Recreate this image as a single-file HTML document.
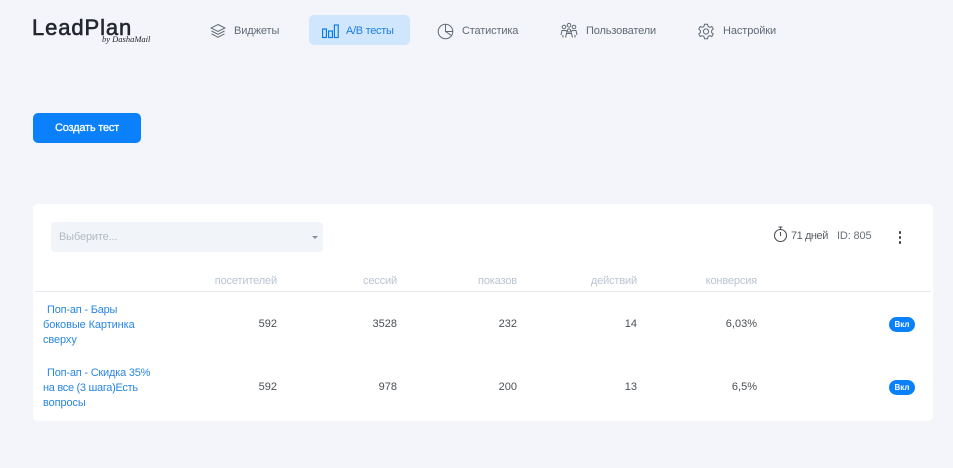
<!DOCTYPE html>
<html lang="ru"><head><meta charset="utf-8"><title>LeadPlan</title>
<style>
*{margin:0;padding:0;box-sizing:border-box}
html,body{width:953px;height:468px;overflow:hidden;background:#f3f5fa;font-family:"Liberation Sans",sans-serif}
.t{position:absolute;white-space:nowrap;line-height:14px}
.nav{font-size:11px;color:#5f6a75;top:24px;letter-spacing:-.1px}
.h{font-size:11px;color:#b9c4d2;top:274px;letter-spacing:-.15px;text-align:right;width:90px}
.n{font-size:11px;color:#4a4f55;text-align:right;width:70px}
.l{font-size:11px;color:#2a86e0;left:43px;line-height:15px;letter-spacing:-.1px}
.l span{margin-left:4px;letter-spacing:-.2px}
.b{position:absolute;left:889px;width:26px;height:15px;border-radius:8px;background:#0a80fa;color:#fff;font-size:8px;font-weight:bold;text-align:center;line-height:15px}
svg{position:absolute;fill:none;stroke:#5f6a75;stroke-width:1}
</style></head><body>
<div class="t" style="left:32px;top:14px;font-size:22px;line-height:27px;color:#25272f;letter-spacing:.9px;-webkit-text-stroke:.6px #25272f">LeadPlan</div>
<div class="t" style="left:102px;top:34px;font-size:8.5px;line-height:10px;color:#25272f;font-family:'Liberation Serif',serif;font-style:italic">by DashaMail</div>

<svg style="left:210px;top:23px" width="16" height="16" viewBox="0 0 16 16"><path d="M8 1.5 15 5 8 8.5 1 5Z"/><path d="M1.5 8 8 11.3 14.5 8"/><path d="M1.5 10.8 8 14.3 14.5 10.8"/></svg>
<div class="t nav" style="left:234px">Виджеты</div>

<div style="position:absolute;left:309px;top:15px;width:101px;height:30px;border-radius:5px;background:#cfe6fd"></div>
<svg style="left:322px;top:24px;stroke:#0a7de8;stroke-width:1.2" width="17" height="15" viewBox="0 0 17 15"><rect x=".6" y="5" width="3.8" height="8.5"/><rect x="6.6" y="7" width="3.8" height="6.5"/><rect x="12.4" y="1" width="3.8" height="12.5"/></svg>
<div class="t nav" style="left:346px;color:#1a7fe0;letter-spacing:-.3px">A/B тесты</div>

<svg style="left:437px;top:23px" width="17" height="17" viewBox="0 0 17 17"><circle cx="8.5" cy="8.5" r="7.3"/><path d="M8.5 1.2V8.5L14.5 12.5"/><path d="M8.5 8.5H15.8"/></svg>
<div class="t nav" style="left:462px;letter-spacing:-.15px">Статистика</div>

<svg style="left:560px;top:22px;stroke-width:1" width="18" height="17" viewBox="0 0 18 17"><circle cx="4" cy="5" r="1.8"/><circle cx="9" cy="3.2" r="1.8"/><circle cx="14" cy="5" r="1.8"/><circle cx="9" cy="8.5" r="1.6"/><path d="M1 13 2 8.5H6L7 11"/><path d="M11 11 12 8.5H16L17 13"/><path d="M5.5 15.5 6.5 11.5H11.5L12.5 15.5"/><path d="M3 13V15.5M15 13V15.5"/></svg>
<div class="t nav" style="left:586px;letter-spacing:-.15px">Пользователи</div>

<svg style="left:698px;top:23px" width="16" height="17" viewBox="0 0 16 17"><circle cx="8" cy="8.5" r="2.6"/><path d="M6.5 1.2H9.5L10 3.4 11.8 4.3 13.8 3.5 15.2 6 13.6 7.5V9.5L15.2 11 13.8 13.5 11.8 12.7 10 13.6 9.5 15.8H6.5L6 13.6 4.2 12.7 2.2 13.5.8 11 2.4 9.5V7.5L.8 6 2.2 3.5 4.2 4.3 6 3.4Z"/></svg>
<div class="t nav" style="left:723px;letter-spacing:-.1px">Настройки</div>

<div style="position:absolute;left:33px;top:113px;width:108px;height:30px;border-radius:5px;background:#0a80fa;color:#fff;font-size:11px;-webkit-text-stroke:.3px #fff;letter-spacing:-.2px;text-align:center;line-height:30px">Создать тест</div>

<div style="position:absolute;left:33px;top:204px;width:900px;height:217px;border-radius:5px;background:#fff"></div>
<div style="position:absolute;left:51px;top:222px;width:272px;height:30px;border-radius:4px;background:#f1f4f9"></div>
<div class="t" style="left:59px;top:230px;font-size:11px;color:#b4bac2;letter-spacing:-.15px">Выберите...</div>
<div style="position:absolute;left:312px;top:236px;border:3px solid transparent;border-top:3px solid #8a9099;border-bottom:0"></div>

<svg style="left:773px;top:226px;stroke:#4a4f55;stroke-width:1.1" width="15" height="17" viewBox="0 0 15 17"><circle cx="7.5" cy="9.5" r="6"/><path d="M7.5 6V10M5.5 1H9.5M7.5 1V3.5"/></svg>
<div class="t" style="left:791px;top:229px;font-size:11px;color:#5a5f66;letter-spacing:-.45px">71 дней</div>
<div class="t" style="left:837px;top:229px;font-size:11px;color:#6a7078;letter-spacing:-.15px">ID: 805</div>
<div style="position:absolute;left:898.5px;top:231px;width:2.6px;height:2.6px;border-radius:50%;background:#3a3f45;box-shadow:0 5px 0 #3a3f45,0 10px 0 #3a3f45"></div>

<div class="t h" style="left:187px">посетителей</div>
<div class="t h" style="left:307px">сессий</div>
<div class="t h" style="left:427px">показов</div>
<div class="t h" style="left:547px">действий</div>
<div class="t h" style="left:667px">конверсия</div>
<div style="position:absolute;left:35px;top:291px;width:896px;height:1px;background:#e6e9ee"></div>

<div class="t l" style="top:303px"><span>Поп-ап - Бары</span><br>боковые Картинка<br>сверху</div>
<div class="t n" style="left:207px;top:317px">592</div>
<div class="t n" style="left:327px;top:317px">3528</div>
<div class="t n" style="left:447px;top:317px">232</div>
<div class="t n" style="left:567px;top:317px">14</div>
<div class="t n" style="left:687px;top:317px">6,03%</div>
<div class="b" style="top:317px">Вкл</div>

<div class="t l" style="top:366px"><span>Поп-ап - Скидка 35%</span><br><span style="margin-left:0;letter-spacing:-.3px">на все (3 шага)Есть</span><br>вопросы</div>
<div class="t n" style="left:207px;top:380px">592</div>
<div class="t n" style="left:327px;top:380px">978</div>
<div class="t n" style="left:447px;top:380px">200</div>
<div class="t n" style="left:567px;top:380px">13</div>
<div class="t n" style="left:687px;top:380px">6,5%</div>
<div class="b" style="top:380px">Вкл</div>
</body></html>
